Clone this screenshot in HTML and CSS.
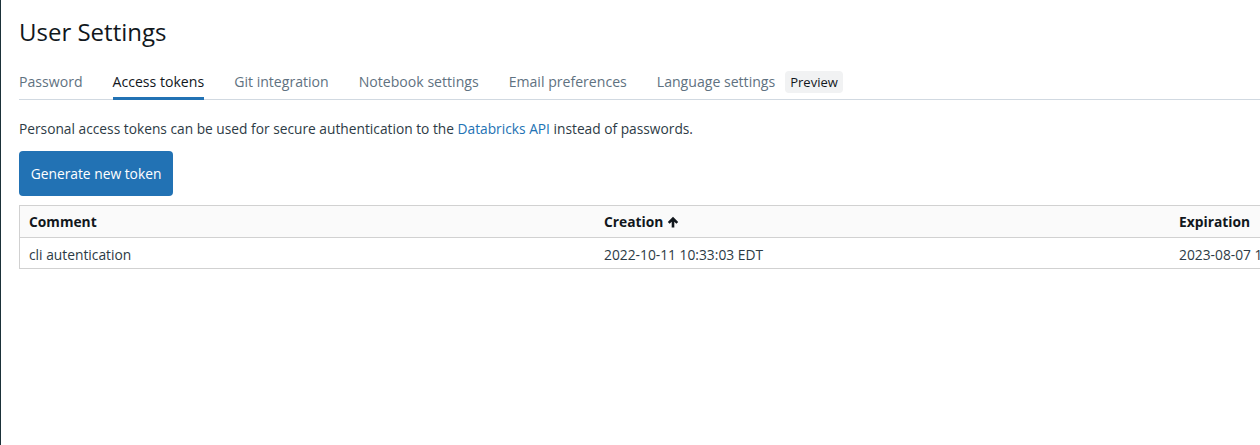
FILE: index.html
```html
<!DOCTYPE html>
<html lang="en">
<head>
    <meta charset="UTF-8">
    <meta name="viewport" content="width=device-width, initial-scale=1.0">
    <title>User Settings</title>
    <link rel="stylesheet" href="styles.css">
</head>
<body>
    <div class="page">
        <h1>User Settings</h1>

        <!-- Tabs -->
        <div class="tabs">
            <a class="tab">Password</a>
            <a class="tab active">Access tokens</a>
            <a class="tab">Git integration</a>
            <a class="tab">Notebook settings</a>
            <a class="tab">Email preferences</a>
            <a class="tab">Language settings <span class="badge">Preview</span></a>
        </div>

        <p class="intro">Personal access tokens can be used for secure authentication to the <a href="#">Databricks API</a> instead of passwords.</p>

        <button class="generate-btn">Generate new token</button>

        <!-- Tokens table -->
        <table class="tokens-table">
            <thead>
                <tr>
                    <th>Comment</th>
                    <th>Creation <svg class="sort-icon" viewBox="0 0 12 12" width="12" height="12"><path d="M6 0.8 L11.2 6 L9.4 7.8 L7.3 5.7 L7.3 11.5 L4.7 11.5 L4.7 5.7 L2.6 7.8 L0.8 6 Z" fill="#11171c"/></svg></th>
                    <th>Expiration</th>
                    <th></th>
                </tr>
            </thead>
            <tbody>
                <tr>
                    <td>cli autentication</td>
                    <td>2022-10-11 10:33:03 EDT</td>
                    <td>2023-08-07 10:33:03 EDT</td>
                    <td></td>
                </tr>
            </tbody>
        </table>
    </div>
</body>
</html>
```

FILE: styles.css
```css
body {
    margin: 0;
    padding: 0;
    font-family: "Open Sans", sans-serif;
    background: white;
    color: #11171c;
    overflow: hidden;
}

.page {
    border-left: 1px solid #1b3139;
    height: 445px;
    padding: 0 0 0 18px;
    box-sizing: border-box;
}

h1 {
    margin: 0;
    padding-top: 15px;
    font-size: 24px;
    font-weight: 400;
    line-height: 34px;
    color: #11171c;
}

.tabs {
    display: flex;
    gap: 30px;
    margin-top: 22px;
    border-bottom: 1px solid #d1d9e1;
    width: 1300px;
}

.tab {
    font-size: 14.1px;
    line-height: 22px;
    padding-bottom: 4px;
    color: #5f7281;
    border-bottom: 3px solid transparent;
    margin-bottom: -1px;
    display: flex;
    align-items: center;
    gap: 10px;
}

.tab.active {
    color: #11171c;
    border-bottom-color: #2272b4;
}

.badge {
    background-color: #f1f2f3;
    color: #11171c;
    font-size: 13px;
    line-height: 22px;
    padding: 0 5px;
    border-radius: 4px;
}

.intro {
    margin: 18px 0 0;
    font-size: 13.75px;
    line-height: 22px;
    color: #2d3b45;
}

.intro a {
    color: #2272b4;
    text-decoration: none;
}

.generate-btn {
    margin-top: 11px;
    width: 154px;
    height: 45px;
    background-color: #2272b4;
    color: white;
    border: none;
    border-radius: 4px;
    font-family: "Open Sans", sans-serif;
    font-size: 13.8px;
    padding: 0;
    display: block;
}

.tokens-table {
    margin-top: 9px;
    border-collapse: collapse;
    width: 2300px;
    table-layout: fixed;
    font-size: 13.8px;
}

.tokens-table th, .tokens-table td {
    border-top: 1px solid #d1d1d1;
    border-bottom: 1px solid #d1d1d1;
    padding: 0 9px;
    text-align: left;
    width: 557px;
}

.tokens-table th:first-child, .tokens-table td:first-child {
    border-left: 1px solid #d1d1d1;
}

.tokens-table th {
    background-color: #fafafa;
    font-weight: 700;
    height: 31px;
}

.tokens-table td {
    height: 28px;
    padding-top: 2px;
    color: #2d3b45;
}

.sort-icon {
    vertical-align: -1px;
}
```
